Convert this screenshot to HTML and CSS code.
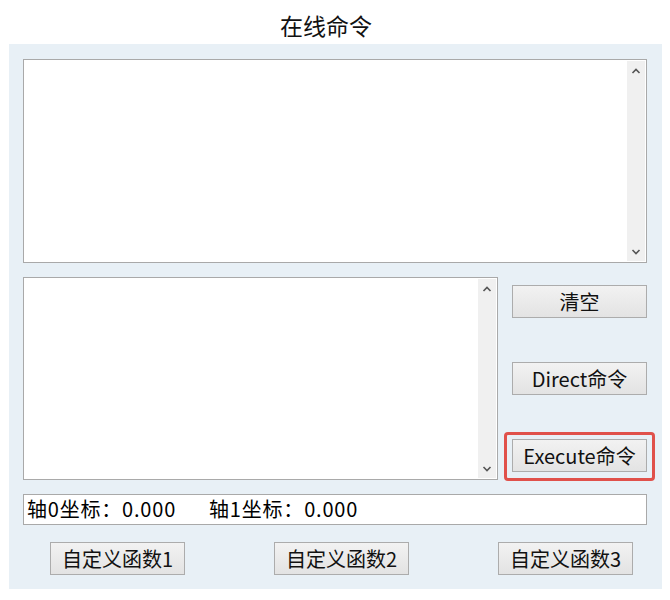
FILE: index.html
```html
<!DOCTYPE html>
<html>
<head>
<meta charset="utf-8">
<link rel="stylesheet" href="styles.css">
</head>
<body>
<h1 class="title">在线命令</h1>
<div class="panel">
  <div class="box box-top">
    <div class="box-content"></div>
    <div class="scrollbar">
      <svg class="arrow" width="10" height="8" viewBox="0 0 10 8"><path d="M1.5 6 L5 2.5 L8.5 6" fill="none" stroke="#555" stroke-width="1.6"/></svg>
      <svg class="arrow" width="10" height="8" viewBox="0 0 10 8"><path d="M1.5 2 L5 5.5 L8.5 2" fill="none" stroke="#555" stroke-width="1.6"/></svg>
    </div>
  </div>
  <div class="middle">
    <div class="box box-mid">
      <div class="box-content"></div>
      <div class="scrollbar">
        <svg class="arrow" width="10" height="8" viewBox="0 0 10 8"><path d="M1.5 6 L5 2.5 L8.5 6" fill="none" stroke="#555" stroke-width="1.6"/></svg>
        <svg class="arrow" width="10" height="8" viewBox="0 0 10 8"><path d="M1.5 2 L5 5.5 L8.5 2" fill="none" stroke="#555" stroke-width="1.6"/></svg>
      </div>
    </div>
    <div class="side">
      <button class="btn side-btn">清空</button>
      <button class="btn side-btn">Direct命令</button>
      <button class="btn side-btn highlight">Execute命令</button>
    </div>
  </div>
  <div class="status">轴0坐标：0.000<span class="gap"></span>轴1坐标：0.000</div>
  <div class="bottom">
    <button class="btn fn-btn">自定义函数1</button>
    <button class="btn fn-btn">自定义函数2</button>
    <button class="btn fn-btn">自定义函数3</button>
  </div>
</div>
</body>
</html>
```
FILE: styles.css
```css
* { box-sizing: border-box; }
html, body { margin: 0; padding: 0; background: #ffffff; }
body {
  width: 670px;
  height: 600px;
  font-family: "Noto Sans CJK SC", "Noto Sans", sans-serif;
  color: #000;
  overflow: hidden;
}
.title {
  margin: 0;
  height: 44px;
  padding: 9px 18px 0 0;
  font-size: 23px;
  font-weight: normal;
  line-height: 32px;
  text-align: center;
  color: #111;
}
.panel {
  margin-left: 9px;
  width: 653px;
  height: 545px;
  background: #e8f0f6;
  padding: 15px 15px 14px 14px;
  display: flex;
  flex-direction: column;
}
.box {
  background: #fff;
  border: 1px solid #a9a9a9;
  display: flex;
}
.box-content { flex: 1; }
.box-top { height: 204px; }
.scrollbar {
  width: 18px;
  margin: 1px 1px 1px 0;
  background: #f0f0f0;
  display: flex;
  flex-direction: column;
  justify-content: space-between;
  align-items: center;
  padding: 6px 0 5px;
}
.arrow { display: block; }
.middle {
  margin-top: 14px;
  height: 203px;
  display: flex;
  gap: 14px;
}
.box-mid { width: 475px; }
.side {
  width: 135px;
  display: flex;
  flex-direction: column;
  justify-content: space-between;
  padding: 8px 0 8px;
}
.btn {
  font-family: "Noto Sans CJK SC", "Noto Sans", sans-serif;
  font-size: 20px;
  color: #111;
  background: linear-gradient(#f2f2f2, #e3e3e3);
  border: 1px solid #acacac;
  border-radius: 0;
  padding: 0;
  height: 33px;
  line-height: 30px;
  text-align: center;
}
.side-btn { width: 135px; }
.highlight { position: relative; }
.highlight::after {
  content: "";
  position: absolute;
  left: -9px;
  right: -9px;
  top: -8px;
  bottom: -10px;
  border: 3px solid #e0514b;
  border-radius: 4px;
}
.status {
  margin-top: 14px;
  height: 31px;
  background: #fff;
  border: 1px solid #a9a9a9;
  font-size: 20px;
  line-height: 28px;
  padding-left: 3px;
  letter-spacing: 0.8px;
  white-space: nowrap;
}
.gap { display: inline-block; width: 33px; }
.bottom {
  margin-top: 17px;
  display: flex;
  justify-content: space-between;
  padding: 0 14px 0 27px;
}
.fn-btn { width: 135px; }
```
